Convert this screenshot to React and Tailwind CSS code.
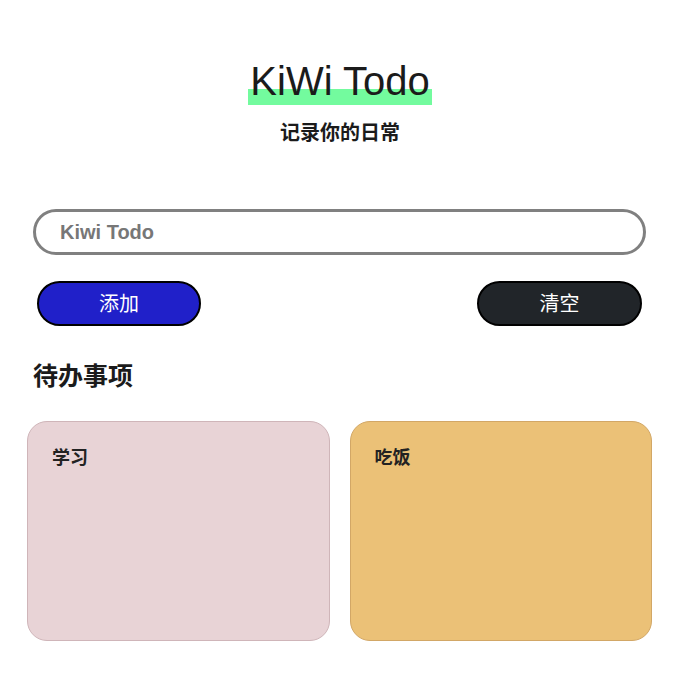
export default function App() {
  const todos = [
    { id: 1, text: '学习', color: 'bg-[#e8d3d6] border-[#cfb5b9]' },
    { id: 2, text: '吃饭', color: 'bg-[#ebc177] border-[#d2a766]' },
  ]

  return (
    <div className="min-h-screen bg-white font-['Liberation_Sans','Noto_Sans_CJK_SC',sans-serif] text-[#1b1b1b]">
      <header className="flex flex-col items-center pt-[58px]">
        <h1 className="inline-block bg-[linear-gradient(transparent_66%,#73fb9e_66%)] px-[2px] text-[40px] font-normal leading-[47px]">
          KiWi Todo
        </h1>
        <p className="mt-[14px] text-[20px] font-bold leading-[28px]">记录你的日常</p>
      </header>

      <div className="mt-[62px] pl-[33px] pr-[34px]">
        <input
          type="text"
          placeholder="Kiwi Todo"
          className="h-[46px] w-full rounded-full border-[3px] border-[#808080] bg-white px-6 text-[20px] font-bold outline-none placeholder:text-[#777777]"
        />
      </div>

      <div className="mt-[26px] flex justify-between pl-[37px] pr-[38px]">
        <button className="h-[45px] w-[164px] rounded-full border-2 border-black bg-[#2020c9] text-[20px] text-white">
          添加
        </button>
        <button className="h-[45px] w-[165px] rounded-full border-2 border-black bg-[#212529] text-[20px] text-white">
          清空
        </button>
      </div>

      <h2 className="mt-[34px] pl-[33px] text-[25px] font-bold leading-[33px]">待办事项</h2>

      <div className="mt-[28px] grid grid-cols-2 gap-5 pl-[27px] pr-[28px]">
        {todos.map((todo) => (
          <div
            key={todo.id}
            className={`h-[220px] rounded-[20px] border px-6 pt-6 ${todo.color}`}
          >
            <p className="text-[18px] font-bold leading-[24px] text-[#222222]">{todo.text}</p>
          </div>
        ))}
      </div>
    </div>
  )
}
